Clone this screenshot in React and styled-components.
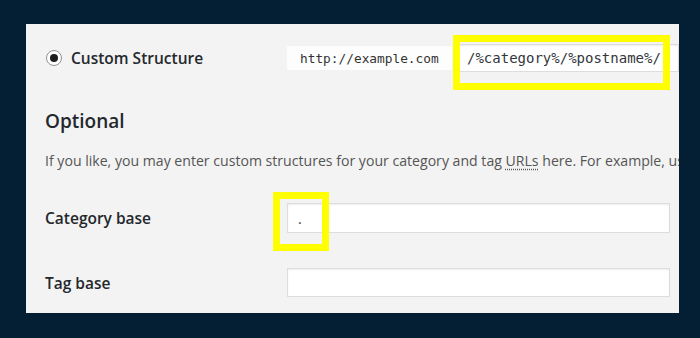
import React from "react";
import styled, { createGlobalStyle } from "styled-components";

const GlobalStyle = createGlobalStyle`
  html, body {
    margin: 0;
    padding: 0;
    background: #041e34;
  }
  body {
    font-family: "Open Sans", "Noto Sans", sans-serif;
  }
`;

const Page = styled.div`
  width: 700px;
  height: 338px;
  padding: 24px 0 0 26px;
  box-sizing: border-box;
`;

const Panel = styled.section`
  width: 653px;
  height: 289px;
  background: #f3f3f3;
  overflow: hidden;
  box-sizing: border-box;
  padding: 20px 0 0 19px;
`;

const Row = styled.div`
  display: grid;
  grid-template-columns: 242px 1fr;
  align-items: center;
  height: ${(p) => p.$height || 30}px;
  margin-top: ${(p) => p.$top || 0}px;
`;

const Label = styled.label`
  display: flex;
  align-items: center;
  gap: 9px;
  font-size: 15.5px;
  font-weight: 600;
  color: #23282d;
  white-space: nowrap;
`;

const Radio = styled.span`
  width: 16px;
  height: 16px;
  border-radius: 50%;
  border: 1px solid #8f9499;
  background: #fff;
  box-sizing: border-box;
  display: flex;
  align-items: center;
  justify-content: center;
  margin-left: 1px;

  &::after {
    content: "";
    width: 8px;
    height: 8px;
    border-radius: 50%;
    background: #1e1e1e;
  }
`;

const Fields = styled.div`
  display: flex;
  align-items: center;
  gap: 4px;
`;

const Prefix = styled.code`
  display: flex;
  align-items: center;
  height: 24px;
  width: 165px;
  padding-left: 13px;
  box-sizing: border-box;
  background: #fdfdfd;
  font-family: "DejaVu Sans Mono", "Liberation Mono", monospace;
  font-size: 12.8px;
  color: #333;
`;

const Mark = styled.div`
  position: relative;
  flex: ${(p) => (p.$grow ? 1 : "none")};
  width: ${(p) => (p.$width ? `${p.$width}px` : "auto")};
`;

const Highlight = styled.span`
  position: absolute;
  left: ${(p) => p.$left}px;
  top: ${(p) => p.$top}px;
  width: ${(p) => p.$w}px;
  height: ${(p) => p.$h}px;
  border: 7px solid #ffff00;
  box-sizing: border-box;
  pointer-events: none;
`;

const Input = styled.div`
  height: ${(p) => p.$height || 30}px;
  width: ${(p) => (p.$width ? `${p.$width}px` : "auto")};
  background: #fff;
  border: 1px solid #dddddd;
  box-shadow: inset 0 1px 2px rgba(0, 0, 0, 0.07);
  box-sizing: border-box;
  display: flex;
  align-items: center;
  padding-left: ${(p) => p.$pad || 10}px;
  font-family: ${(p) =>
    p.$mono
      ? `"DejaVu Sans Mono", "Liberation Mono", monospace`
      : `"Open Sans", sans-serif`};
  font-size: 14px;
  color: #32373c;
  white-space: nowrap;
`;

const Heading = styled.h2`
  margin: 36px 0 0;
  font-size: 19px;
  line-height: 27px;
  font-weight: 600;
  color: #23282d;
`;

const Text = styled.p`
  margin: 15px 0 0;
  font-size: 14.1px;
  line-height: 21px;
  color: #555;
  white-space: nowrap;

  abbr {
    text-decoration: underline dotted;
    text-underline-offset: 3px;
  }
`;

function App() {
  return (
    <>
      <GlobalStyle />
      <Page>
        <Panel>
          <Row $height={28}>
            <Label>
              <Radio />
              Custom Structure
            </Label>
            <Fields>
              <Prefix>http://example.com</Prefix>
              <Mark $grow>
                <Input $mono $height={28} $pad={10}>
                  /%category%/%postname%/
                </Input>
                <Highlight $left={-3} $top={-9} $w={217} $h={55} />
              </Mark>
            </Fields>
          </Row>

          <Heading>Optional</Heading>
          <Text>
            If you like, you may enter custom structures for your category and
            tag <abbr>URLs</abbr> here. For example, using
          </Text>

          <Row $top={32}>
            <Label>Category base</Label>
            <Mark $width={383}>
              <Input $pad={10}>.</Input>
              <Highlight $left={-14} $top={-11} $w={56} $h={59} />
            </Mark>
          </Row>

          <Row $top={35} $height={29}>
            <Label>Tag base</Label>
            <Input $width={383} $height={29} />
          </Row>
        </Panel>
      </Page>
    </>
  );
}

export default App;
